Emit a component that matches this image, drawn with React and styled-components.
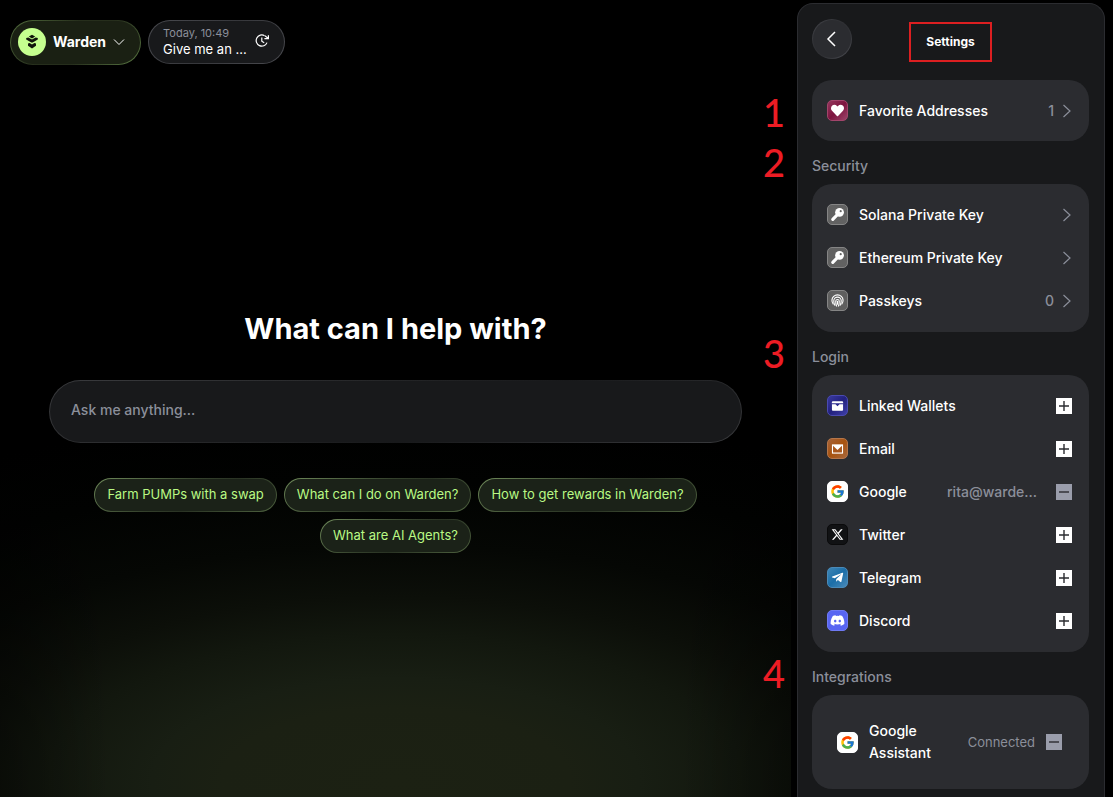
import React from "react";
import styled, { createGlobalStyle, css } from "styled-components";
import { FaDiscord, FaTelegramPlane, FaHeart } from "react-icons/fa";
import { FaXTwitter } from "react-icons/fa6";
import { FcGoogle } from "react-icons/fc";

const GlobalStyle = createGlobalStyle`
  *, *::before, *::after { box-sizing: border-box; }
  body {
    margin: 0;
    background: #000;
    color: #fff;
    font-family: Inter, "Liberation Sans", sans-serif;
    font-size: 14px;
    font-weight: 500;
  }
  button, input { font: inherit; color: inherit; }
  button { cursor: pointer; }
`;

const edge = (fill, stops) => css`
  border: 1px solid transparent;
  background: linear-gradient(${fill}, ${fill}) padding-box,
    linear-gradient(${stops}) border-box;
`;

const Page = styled.div`
  display: flex;
  gap: 6px;
  min-height: 100vh;
  padding-right: 8px;
`;

const Main = styled.main`
  flex: 1;
  min-width: 0;
  display: flex;
  flex-direction: column;
  background:
    linear-gradient(to right, rgba(0, 0, 0, 0.35), transparent 14%, transparent 86%, rgba(0, 0, 0, 0.35)),
    radial-gradient(ellipse 110% 46% at 50% 98%, #1c2113 0%, #1b2013 20%, #181e13 28%, #12170e 40%, #0c0f09 50%, #050704 64%, #010201 82%, #000 100%);
`;

const TopBar = styled.header`
  display: flex;
  align-items: flex-start;
  gap: 7px;
  padding: 20px 10px 0;
`;

const AgentButton = styled.button`
  display: flex;
  align-items: center;
  gap: 7px;
  height: 45px;
  padding: 0 15px 2px 7px;
  border-radius: 23px;
  font-weight: 700;
  ${edge("#1a2013", "135deg, #55703f, #262e1c 40%, #262e1c 60%, #5b7a44")}
`;

const AgentMark = styled.span`
  display: grid;
  place-items: center;
  width: 28px;
  height: 28px;
  border-radius: 50%;
  background: #c5ff8f;
`;

const HistoryButton = styled.button`
  display: flex;
  align-items: center;
  gap: 8px;
  height: 44px;
  padding: 0 14px 3px;
  border-radius: 22px;
  text-align: left;
  ${edge("#18191b", "135deg, #4a4b50, #36373b 50%, #4a4b50")}
`;

const HistoryText = styled.span`
  display: flex;
  flex-direction: column;
  font-size: 13px;
  font-weight: 400;
  line-height: 16px;
`;

const HistoryTime = styled.span`
  color: #8b8f9a;
  font-size: 11px;
`;

const Prompt = styled.section`
  display: flex;
  flex-direction: column;
  align-items: center;
  padding: 246px 49px 48px;
`;

const Heading = styled.h1`
  margin: 0;
  font-size: 29px;
  font-weight: 700;
  line-height: 36px;
`;

const Ask = styled.input`
  width: 100%;
  height: 63px;
  margin-top: 33px;
  padding: 0 21px 4px;
  border-radius: 32px;
  outline: none;
  ${edge("#18191b", "160deg, #3a3b3e, #242527 40%, #18191b 60%, #3a3b3e")}
  &::placeholder { color: #8b8f9a; opacity: 1; }
`;

const Chips = styled.div`
  display: flex;
  flex-wrap: wrap;
  justify-content: center;
  gap: 7px;
  margin-top: 35px;
`;

const Chip = styled.button`
  height: 34px;
  padding: 0 12px 2px;
  border-radius: 17px;
  color: #b9f984;
  font-size: 13px;
  font-weight: 400;
  ${edge("#1b2218", "150deg, #6f8a5a, #34402c 45%, #2a3324 60%, #4f6340")}
`;

const Panel = styled.aside`
  width: 308px;
  margin-top: 3px;
  padding: 15px 15px 8px 14px;
  border: 1px solid #2b2c30;
  border-bottom: 0;
  border-radius: 16px 16px 0 0;
  background: #18191b;
`;

const PanelHeader = styled.header`
  display: grid;
  grid-template-columns: 40px 1fr 40px;
  align-items: start;
  justify-items: center;
  height: 61px;
`;

const BackButton = styled.button`
  display: grid;
  place-items: center;
  width: 40px;
  height: 40px;
  padding: 0;
  border-radius: 50%;
  ${edge("#2b2c30", "135deg, #45464b, #2f3034 40%, #2f3034 60%, #4d4e54")}
`;

const PanelTitle = styled.h2`
  margin: 3px 0 0;
  padding: 0 15px;
  border: 2px solid #dc1f21;
  font-size: 12px;
  font-weight: 700;
  line-height: 36px;
`;

const Section = styled.section`
  position: relative;
`;

const Marker = styled.span`
  position: absolute;
  top: ${(p) => (p.$row ? 2 : 0)}px;
  left: -50px;
  width: 24px;
  color: #ed1c24;
  font-family: Lato, sans-serif;
  font-size: 38px;
  line-height: ${(p) => (p.$row ? 61 : 43)}px;
  text-align: center;
`;

const SectionLabel = styled.h3`
  margin: 0;
  padding: 14px 0 7px;
  color: #8b8f9a;
  font-size: 14px;
  font-weight: 500;
  line-height: 22px;
`;

const Card = styled.ul`
  margin: 0;
  padding: 9px 17px 10px 15px;
  border-radius: 20px;
  background: #2b2c30;
  list-style: none;
`;

const SingleCard = styled(Card)`
  padding-bottom: 9px;
`;

const IntegrationCard = styled(Card)`
  padding: 25px 27px 25px 25px;
`;

const Row = styled.li`
  display: flex;
  align-items: center;
  gap: 11px;
  min-height: 43px;
  line-height: 22px;
`;

const RowName = styled.span`
  flex: 1;
`;

const RowNote = styled.span`
  color: #8b8f9a;
  font-size: ${(p) => (p.$small ? 13 : 14)}px;
  font-weight: ${(p) => (p.$small ? 400 : 500)};
`;

const GoButton = styled.button`
  display: flex;
  align-items: center;
  gap: 6px;
  padding: 0;
  border: 0;
  background: none;
  color: #8b8f9a;
`;

const ToggleButton = styled.button`
  display: grid;
  place-items: center;
  width: 16px;
  height: 16px;
  margin-left: ${(p) => (p.$wide ? 8 : 0)}px;
  padding: 0;
  border: 0;
  background: ${(p) => (p.$on ? "#9a9dab" : "#fff")};
  color: #2b2c30;
`;

const Badge = styled.span`
  display: grid;
  place-items: center;
  flex: none;
  width: 21px;
  height: 21px;
  border: 1px solid ${(p) => p.$line};
  border-radius: 5px;
  background: ${(p) => p.$fill};
  color: #fff;
`;

const Chevron = () => (
  <svg width="12" height="16" viewBox="0 0 12 16" fill="none" stroke="currentColor" strokeWidth="1.2" aria-hidden="true">
    <path d="M3.5 2l6.5 6-6.5 6" />
  </svg>
);

const KeyIcon = () => (
  <svg width="15" height="15" viewBox="0 0 14 14" aria-hidden="true">
    <circle cx="8.9" cy="5" r="4.1" fill="#fff" />
    <path d="M7 7L2.6 11.5" stroke="#fff" strokeWidth="3" strokeLinecap="round" />
    <circle cx="10" cy="3.9" r="1" fill="#666" />
  </svg>
);

const FingerprintIcon = () => (
  <svg width="13" height="13" viewBox="0 0 14 14" fill="none" stroke="#fff" strokeWidth="1.2" strokeLinecap="round" aria-hidden="true">
    <path d="M2.4 10.8A6 6 0 1111.6 10.8" />
    <path d="M4.2 12.2c-.8-1.4-1.300-3-1.200-4.800a4 4 0 018 0c0 1.800-.4 3.400-1.200 4.800" />
    <path d="M6 13c-.6-1.600-1-3.400-.9-5.200a1.900 1.900 0 013.800 0c0 1.800-.3 3.600-.9 5.200" />
    <path d="M7 7.800V11" />
  </svg>
);

const WalletIcon = () => (
  <svg width="13" height="12" viewBox="0 0 14 12" aria-hidden="true">
    <rect x="1" y="1" width="12" height="10" rx="1" fill="#fff" />
    <path d="M1 3h12v1H9.200L7 6.200 4.800 4H1z" fill="#2b2a8e" />
  </svg>
);

const MailIcon = () => (
  <svg width="13" height="12" viewBox="0 0 14 12" aria-hidden="true">
    <rect x="1" y="1" width="12" height="10" fill="#fff" />
    <path d="M2.200 2.600v7.200h9.600V2.600L7 7.200z" fill="#a9571c" />
  </svg>
);

const PlusMinus = ({ on }) => (
  <svg width="16" height="16" viewBox="0 0 16 16" stroke="currentColor" strokeWidth="1.4" aria-hidden="true">
    <path d={on ? "M3 8h10" : "M3 8h10M8 3v10"} />
  </svg>
);

const badges = {
  heart: { fill: "linear-gradient(135deg, #94355c, #7d143f 50%, #9a4468)", line: "#a2456b", icon: <FaHeart size={13} /> },
  key: { fill: "#626262", line: "#858585", icon: <KeyIcon /> },
  finger: { fill: "#5f5f5f", line: "#858585", icon: <FingerprintIcon /> },
  wallet: { fill: "linear-gradient(135deg, #3a3a9f, #22217e 50%, #3f3fa8)", line: "#4a4ab0", icon: <WalletIcon /> },
  mail: { fill: "linear-gradient(135deg, #a5633a, #a8530f 50%, #a8683c)", line: "#b5764a", icon: <MailIcon /> },
  google: { fill: "#fff", line: "#fff", icon: <FcGoogle size={15} /> },
  x: { fill: "#111214", line: "#0a0a0b", icon: <FaXTwitter size={13} /> },
  telegram: { fill: "linear-gradient(135deg, #3f86b5, #1b6ea8 50%, #4a8ab8)", line: "#4a8ab8", icon: <FaTelegramPlane size={13} /> },
  discord: { fill: "#5865f2", line: "#6f7af4", icon: <FaDiscord size={15} /> },
};

const RowBadge = ({ kind }) => (
  <Badge $fill={badges[kind].fill} $line={badges[kind].line}>{badges[kind].icon}</Badge>
);

const LinkRow = ({ kind, name, count }) => (
  <Row>
    <RowBadge kind={kind} />
    <RowName>{name}</RowName>
    <GoButton aria-label={"Open " + name}>
      {count}
      <Chevron />
    </GoButton>
  </Row>
);

const AccountRow = ({ kind, name, note, on, integration }) => (
  <Row>
    <RowBadge kind={kind} />
    <RowName>{name}</RowName>
    {note && <RowNote $small={integration}>{note}</RowNote>}
    <ToggleButton $on={on} $wide={note && !integration} aria-label={(on ? "Disconnect " : "Connect ") + name}>
      <PlusMinus on={on} />
    </ToggleButton>
  </Row>
);

const suggestions = [
  "Farm PUMPs with a swap",
  "What can I do on Warden?",
  "How to get rewards in Warden?",
  "What are AI Agents?",
];

export default function App() {
  return (
    <Page>
      <GlobalStyle />
      <Main>
        <TopBar>
          <AgentButton>
            <AgentMark>
              <svg width="14" height="16" viewBox="0 0 14 16" fill="#10140b" aria-hidden="true">
                <path d="M7 .8l3.200 1.800L7 4.400 3.800 2.600z" />
                <path d="M1.200 4L3.400 3.600 7 5.600l3.600-2 2.200.4v1.600L9.400 7.600 7 8.800 4.600 7.600 1.200 5.600z" />
                <path d="M3 9.600l1.600-.6L7 10.600 9.400 9l1.600.6v2.200L7 14.600l-4-2.800z" />
              </svg>
            </AgentMark>
            Warden
            <svg width="12" height="8" viewBox="0 0 12 8" fill="none" stroke="currentColor" aria-hidden="true">
              <path d="M1 1.500l5 5 5-5" />
            </svg>
          </AgentButton>
          <HistoryButton>
            <HistoryText>
              <HistoryTime>Today, 10:49</HistoryTime>
              Give me an ...
            </HistoryText>
            <svg width="15" height="14" viewBox="0 0 15 14" fill="none" stroke="currentColor" strokeWidth="1.2" aria-hidden="true">
              <path d="M9.600 1.700A5.600 5.600 0 1012 8.600" />
              <path d="M6.800 3.600v3.600l2.400 1.500" />
              <path d="M9.400 4.600h4V1.200M13.400 4.600L10 1.800" />
            </svg>
          </HistoryButton>
        </TopBar>
        <Prompt>
          <Heading>What can I help with?</Heading>
          <Ask type="text" aria-label="Ask me anything" placeholder="Ask me anything..." />
          <Chips>
            {suggestions.map((s) => <Chip key={s}>{s}</Chip>)}
          </Chips>
        </Prompt>
      </Main>
      <Panel>
        <PanelHeader>
          <BackButton aria-label="Back">
            <svg width="12" height="16" viewBox="0 0 12 16" fill="none" stroke="currentColor" strokeWidth="1.5" aria-hidden="true">
              <path d="M9 1L2 8l7 7" />
            </svg>
          </BackButton>
          <PanelTitle>Settings</PanelTitle>
        </PanelHeader>
        <Section>
          <Marker $row>1</Marker>
          <SingleCard>
            <LinkRow kind="heart" name="Favorite Addresses" count="1" />
          </SingleCard>
        </Section>
        <Section>
          <Marker>2</Marker>
          <SectionLabel>Security</SectionLabel>
          <Card>
            <LinkRow kind="key" name="Solana Private Key" />
            <LinkRow kind="key" name="Ethereum Private Key" />
            <LinkRow kind="finger" name="Passkeys" count="0" />
          </Card>
        </Section>
        <Section>
          <Marker>3</Marker>
          <SectionLabel>Login</SectionLabel>
          <Card>
            <AccountRow kind="wallet" name="Linked Wallets" />
            <AccountRow kind="mail" name="Email" />
            <AccountRow kind="google" name="Google" note="rita@warde..." on />
            <AccountRow kind="x" name="Twitter" />
            <AccountRow kind="telegram" name="Telegram" />
            <AccountRow kind="discord" name="Discord" />
          </Card>
        </Section>
        <Section>
          <Marker>4</Marker>
          <SectionLabel>Integrations</SectionLabel>
          <IntegrationCard>
            <AccountRow kind="google" name="Google Assistant" note="Connected" on integration />
          </IntegrationCard>
        </Section>
      </Panel>
    </Page>
  );
}
